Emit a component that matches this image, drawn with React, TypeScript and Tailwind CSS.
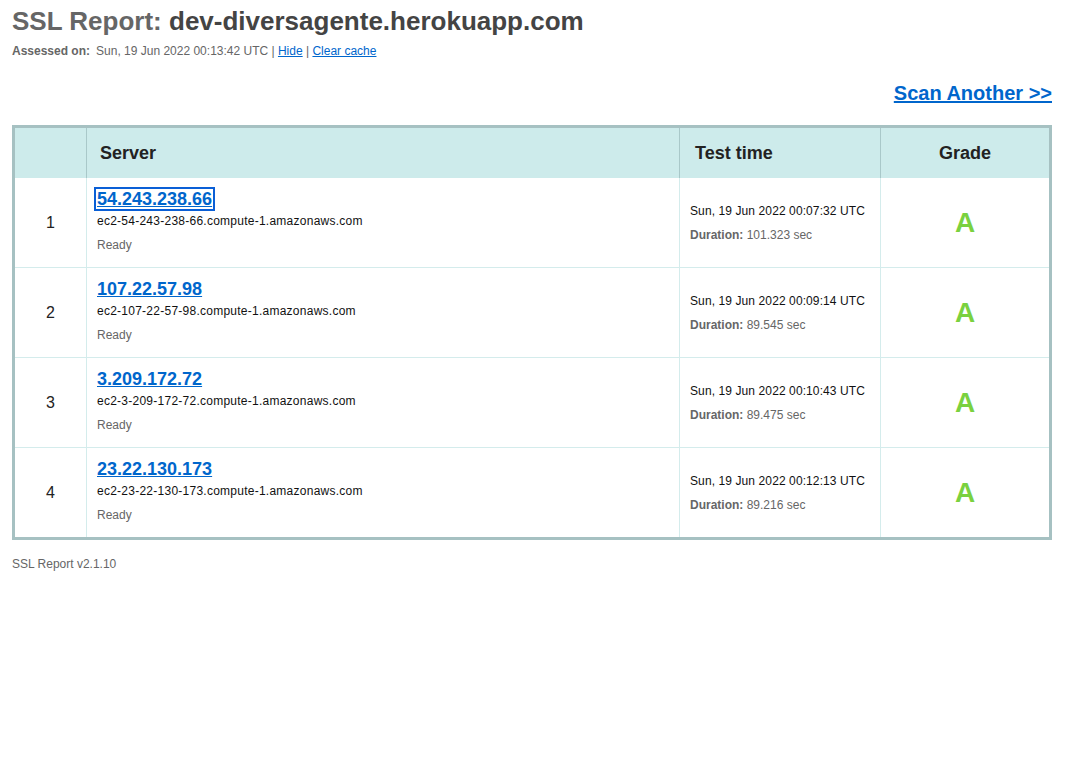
import React from "react";

const rows = [
  { n: 1, ip: "54.243.238.66", host: "ec2-54-243-238-66.compute-1.amazonaws.com", time: "Sun, 19 Jun 2022 00:07:32 UTC", dur: "101.323 sec", focus: true },
  { n: 2, ip: "107.22.57.98", host: "ec2-107-22-57-98.compute-1.amazonaws.com", time: "Sun, 19 Jun 2022 00:09:14 UTC", dur: "89.545 sec" },
  { n: 3, ip: "3.209.172.72", host: "ec2-3-209-172-72.compute-1.amazonaws.com", time: "Sun, 19 Jun 2022 00:10:43 UTC", dur: "89.475 sec" },
  { n: 4, ip: "23.22.130.173", host: "ec2-23-22-130-173.compute-1.amazonaws.com", time: "Sun, 19 Jun 2022 00:12:13 UTC", dur: "89.216 sec" },
];

export default function App() {
  return (
    <div className="min-h-[770px] bg-white px-[12px] pt-[6px] text-[#333]" style={{ fontFamily: '"Liberation Sans", Arial, sans-serif' }}>
      <h1 className="text-[26px] font-bold leading-[30px]">
        <span className="text-[#666]">SSL Report:</span>{" "}
        <span className="text-[#444]">dev-diversagente.herokuapp.com</span>
      </h1>
      <div className="mt-[7px] text-[12px] leading-[16px] text-[#666]">
        <span className="font-bold">Assessed on:</span>
        <span className="ml-[6px]">Sun, 19 Jun 2022 00:13:42 UTC</span> |{" "}
        <a href="#" className="text-[#0066cc] underline">Hide</a> |{" "}
        <a href="#" className="text-[#0066cc] underline">Clear cache</a>
      </div>
      <div className="mt-[21px] flex justify-end w-[1040px]">
        <a href="#" className="text-[20px] font-bold leading-[26px] text-[#0066cc] underline">Scan Another &gt;&gt;</a>
      </div>
      <div className="mt-[19px] w-[1040px] border-[3px] border-[#a6c1c2]">
        <div className="grid grid-cols-[71px_593px_201px_169px] h-[50px] bg-[#cdebeb] text-[18px] font-bold text-[#222]">
          <div></div>
          <div className="border-l border-[#a9c8c9] flex items-center pl-[13px]">Server</div>
          <div className="border-l border-[#a9c8c9] flex items-center pl-[15px]">Test time</div>
          <div className="border-l border-[#a9c8c9] flex items-center justify-center">Grade</div>
        </div>
        {rows.map((r, i) => (
          <div key={r.n} className={`grid grid-cols-[71px_593px_201px_169px] ${i === 0 ? "h-[89px]" : "h-[90px] border-t border-[#d4ecec]"}`}>
            <div className="flex items-center justify-center text-[16px] text-[#222]">{r.n}</div>
            <div className="border-l border-[#d4ecec] pl-[9px] pt-[10px]">
              <a href="#" className={`inline-block text-[18px] font-bold leading-[20px] text-[#0066cc] underline ${r.focus ? "outline-2 outline-[#0a5fd6] px-[1px]" : "px-[1px]"}`}>{r.ip}</a>
              <div className="mt-[1px] pl-[1px] text-[12px] leading-[16px] tracking-[0.25px] text-[#111]">{r.host}</div>
              <div className="mt-[8px] pl-[1px] text-[12px] leading-[16px] text-[#666]">Ready</div>
            </div>
            <div className="border-l border-[#d4ecec] flex flex-col justify-center pl-[10px] text-[12px] leading-[16px] gap-[8px]">
              <div className="text-[#111] tracking-[0.1px]">{r.time}</div>
              <div className="text-[#666]"><span className="font-bold">Duration:</span> {r.dur}</div>
            </div>
            <div className="border-l border-[#d4ecec] flex items-center justify-center text-[28px] font-bold text-[#7ad13f]">A</div>
          </div>
        ))}
      </div>
      <div className="mt-[16px] text-[12px] leading-[16px] text-[#666]">SSL Report v2.1.10</div>
    </div>
  );
}
